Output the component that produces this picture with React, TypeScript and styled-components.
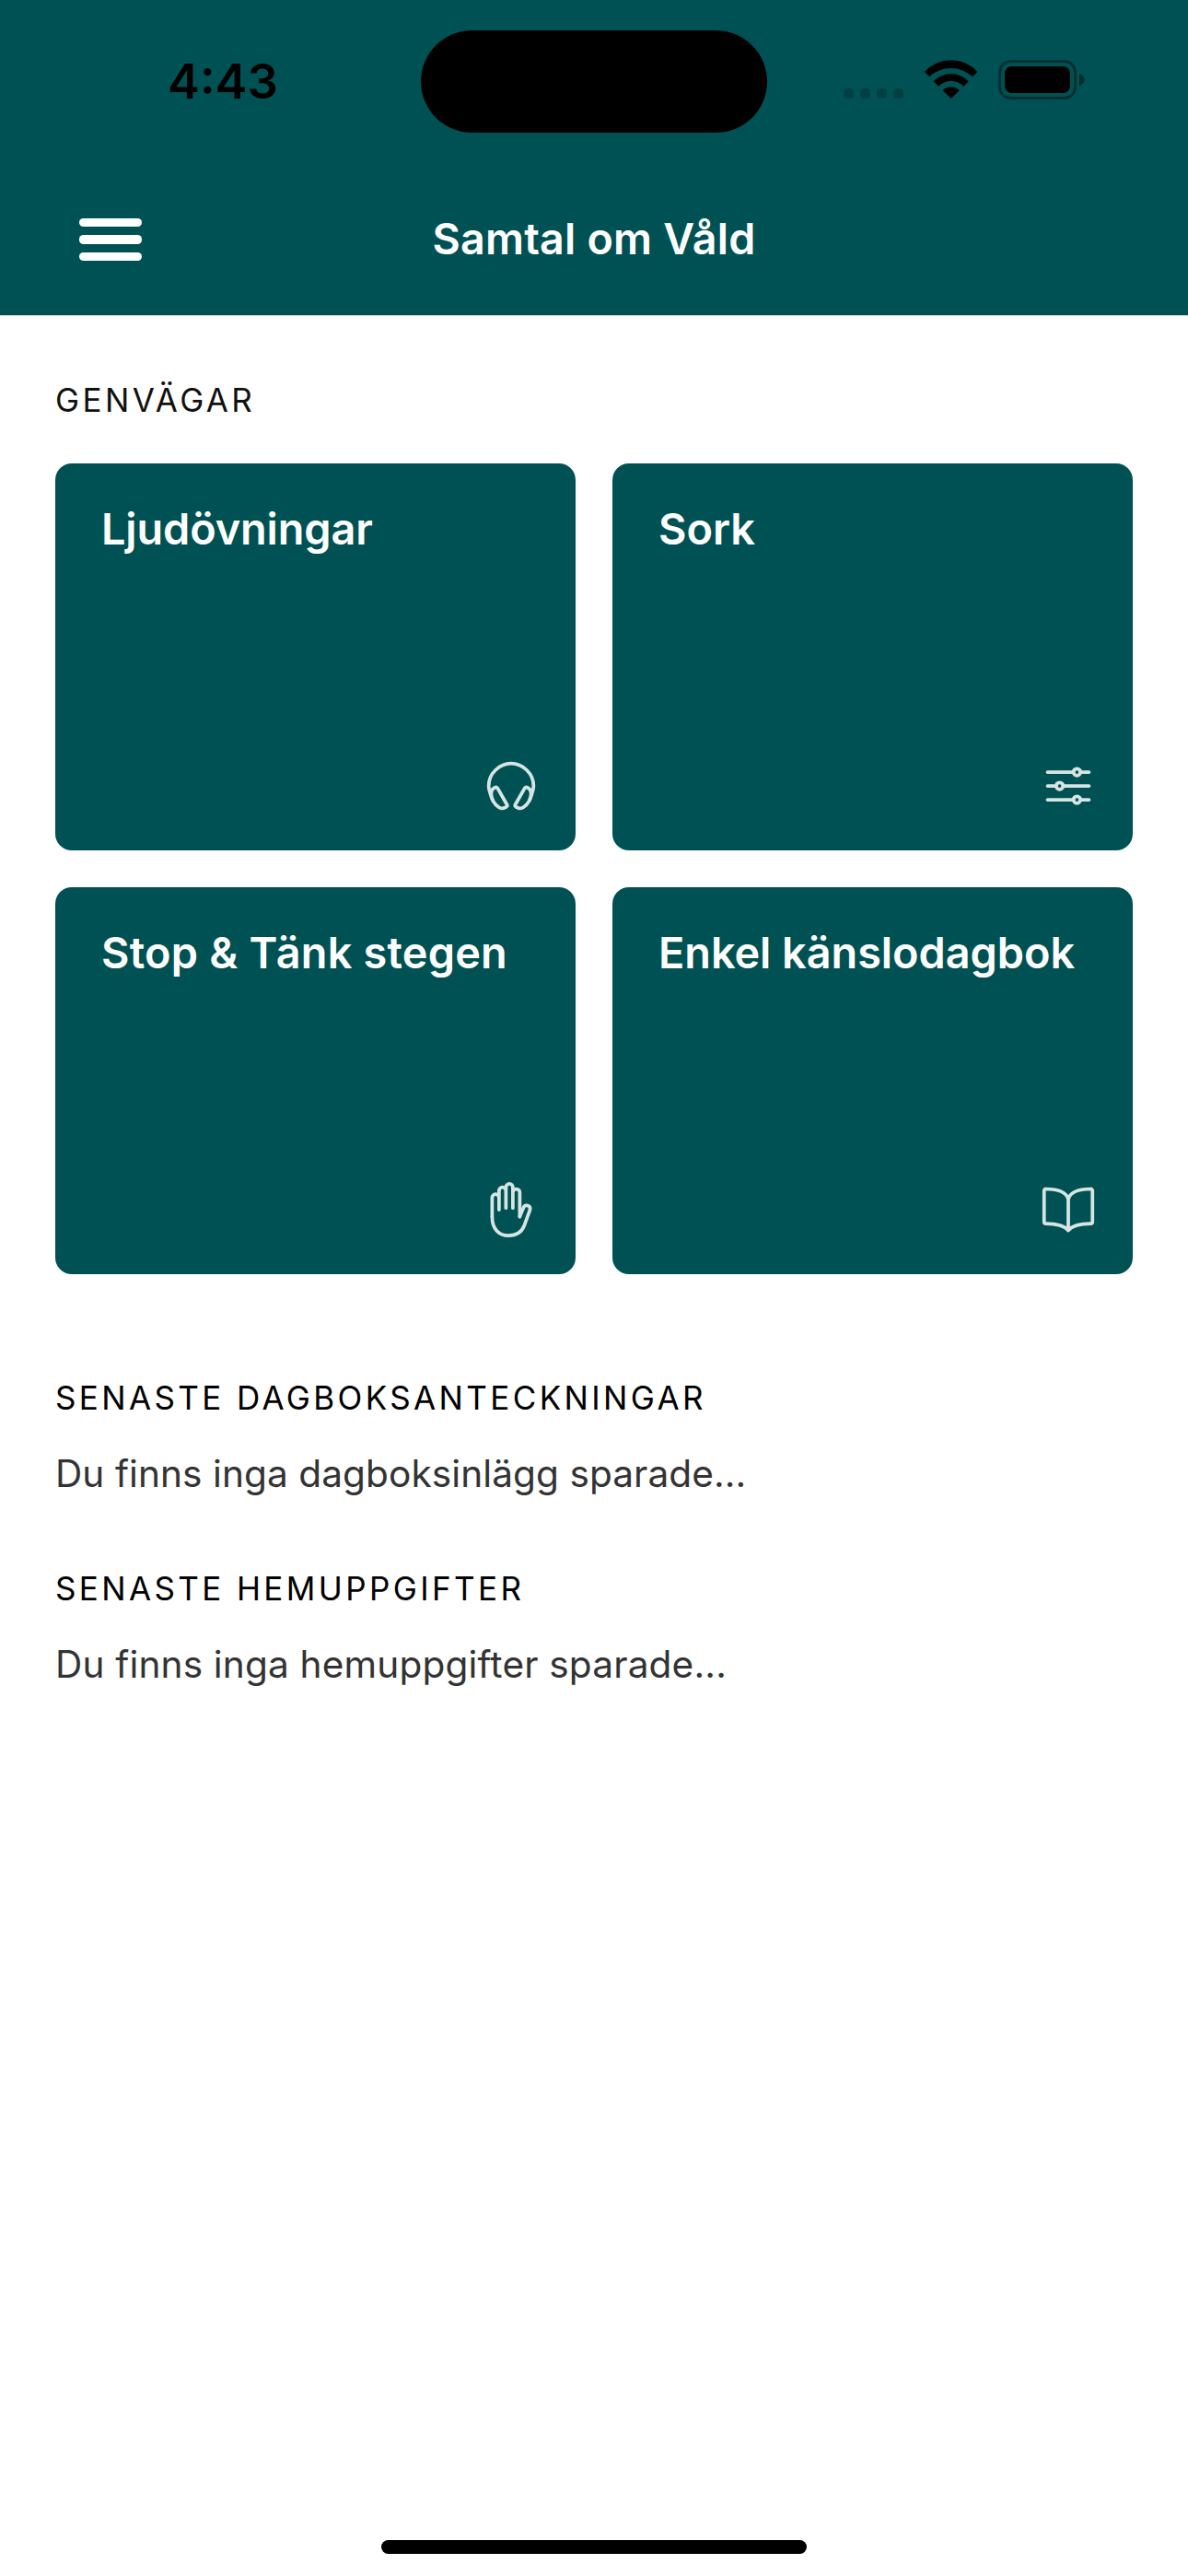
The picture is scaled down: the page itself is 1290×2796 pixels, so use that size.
import React from 'react';
import styled, { createGlobalStyle } from 'styled-components';
import { IoBookOutline, IoHandLeftOutline, IoHeadsetOutline, IoOptionsOutline } from 'react-icons/io5';
import type { IconType } from 'react-icons';

const teal = '#005153';

const GlobalStyle = createGlobalStyle`
  *, *::before, *::after { box-sizing: border-box; }
  body {
    margin: 0;
    background: #fff;
    font-family: Inter, "Liberation Sans", sans-serif;
  }
`;

const Screen = styled.div`
  width: 1290px;
  height: 2796px;
  display: flex;
  flex-direction: column;
  background: #fff;
  overflow: hidden;
`;

const Header = styled.header`
  background: ${teal};
  border-bottom: 1px solid #d5cfd2;
  height: 343px;
  flex: none;
`;

const StatusBar = styled.div`
  height: 177px;
  display: flex;
  align-items: flex-start;
`;

const TimeSlot = styled.div`
  width: 457px;
  padding: 58px 0 0 182px;
`;

const Time = styled.div`
  font-size: 52.4px;
  line-height: 60px;
  font-weight: 600;
  letter-spacing: 0;
  white-space: nowrap;
  color: #000;
`;

const Island = styled.div`
  width: 376px;
  height: 111px;
  margin-top: 33px;
  border-radius: 56px;
  background: #000;
`;

const StatusIcons = styled.div`
  display: flex;
  align-items: flex-end;
  height: 43px;
  margin: 65px 0 0 83px;
`;

const Signal = styled.div`
  display: flex;
  gap: 7px;
  margin: 0 23px 1px 0;
`;

const SignalDot = styled.span`
  width: 11px;
  height: 11px;
  border-radius: 4px;
  background: rgba(0, 0, 0, 0.2);
`;

const WifiIcon = styled.svg`
  display: block;
  width: 58px;
  height: 43px;
  margin-right: 22px;
`;

const BatteryIcon = styled.svg`
  display: block;
  width: 95px;
  height: 43px;
`;

const NavBar = styled.div`
  height: 165px;
  padding: 0 86px;
  display: grid;
  grid-template-columns: 1fr auto 1fr;
  align-items: center;
`;

const MenuButton = styled.button`
  width: 68px;
  padding: 0;
  margin-top: 1px;
  border: 0;
  background: none;
  display: flex;
  flex-direction: column;
  gap: 9.4px;
`;

const MenuLine = styled.span`
  height: 9.2px;
  border-radius: 4.6px;
  background: #fff;
`;

const NavTitle = styled.h1`
  margin: 0 0 2px;
  font-size: 46.6px;
  line-height: 56px;
  font-weight: 600;
  letter-spacing: 0.25px;
  white-space: nowrap;
  color: #fff;
`;

const Content = styled.main`
  flex: 1;
  padding: 70px 60px 0;
`;

const SectionTitle = styled.h2<{ $color?: string }>`
  margin: 0;
  font-size: 35px;
  line-height: 42px;
  font-weight: 400;
  letter-spacing: 3.38px;
  white-space: nowrap;
  color: ${(p) => p.$color ?? '#000'};
`;

const CardGrid = styled.div`
  display: grid;
  grid-template-columns: 1fr 1fr;
  grid-auto-rows: 420px;
  gap: 40px;
  margin: 48px 0 113px;
`;

const Card = styled.article`
  display: flex;
  flex-direction: column;
  justify-content: space-between;
  padding: 43px 0 40px 50px;
  border-radius: 18px;
  background: ${teal};
`;

const CardTitle = styled.h3<{ $tracking: number }>`
  margin: 0;
  font-size: 46.8px;
  line-height: 56px;
  font-weight: 600;
  letter-spacing: ${(p) => p.$tracking}px;
  white-space: nowrap;
  color: #fff;
`;

const CardIcon = styled.div`
  align-self: flex-end;
  margin-right: 40px;
  color: #d5e5e4;
  svg {
    display: block;
    width: 60px;
    height: 60px;
  }
`;

const EmptyText = styled.p<{ $tracking: number }>`
  margin: 37px 0 78px;
  font-size: 40.6px;
  line-height: 50px;
  letter-spacing: ${(p) => p.$tracking}px;
  white-space: nowrap;
  color: #333;
`;

const HomeIndicator = styled.div`
  flex: none;
  align-self: center;
  width: 462px;
  height: 15px;
  margin-bottom: 24px;
  border-radius: 8px;
  background: #000;
`;

type Shortcut = { title: string; icon: IconType; tracking: number };

const shortcuts: Shortcut[] = [
  { title: 'Ljudövningar', icon: IoHeadsetOutline, tracking: -0.1 },
  { title: 'Sork', icon: IoOptionsOutline, tracking: 0 },
  { title: 'Stop & Tänk stegen', icon: IoHandLeftOutline, tracking: 0.23 },
  { title: 'Enkel känslodagbok', icon: IoBookOutline, tracking: -0.03 },
];

export default function App() {
  return (
    <Screen>
      <GlobalStyle />
      <Header>
        <StatusBar>
          <TimeSlot>
            <Time>4:43</Time>
          </TimeSlot>
          <Island />
          <StatusIcons>
            <Signal>
              {[0, 1, 2, 3].map((n) => (
                <SignalDot key={n} />
              ))}
            </Signal>
            <WifiIcon viewBox="0 0 58 43">
              <path d="M0 13A38.8 38.8 0 0 1 57.4 13L52.1 18.3A34 34 0 0 0 5.3 18.3Z" />
              <path d="M9.7 23.3A26 26 0 0 1 47.7 23.3L42.4 28.7A19.4 19.4 0 0 0 15 28.7Z" />
              <path d="M19.7 33.3A12 12 0 0 1 37.7 33.3L28.7 42Z" />
            </WifiIcon>
            <BatteryIcon viewBox="0 0 95 43">
              <rect x="1.5" y="1.5" width="82" height="40" rx="12" fill="none" stroke="#000" strokeOpacity="0.4" strokeWidth="3" />
              <rect x="7" y="7" width="71" height="29" rx="7.5" />
              <path d="M88 15C91.5 16.2 93.7 18.8 93.7 21.5S91.5 27 88 28.3Z" fillOpacity="0.45" />
            </BatteryIcon>
          </StatusIcons>
        </StatusBar>
        <NavBar>
          <MenuButton aria-label="Meny">
            <MenuLine />
            <MenuLine />
            <MenuLine />
          </MenuButton>
          <NavTitle>Samtal om Våld</NavTitle>
        </NavBar>
      </Header>
      <Content>
        <SectionTitle $color="#111">GENVÄGAR</SectionTitle>
        <CardGrid>
          {shortcuts.map(({ title, icon: Icon, tracking }) => (
            <Card key={title}>
              <CardTitle $tracking={tracking}>{title}</CardTitle>
              <CardIcon>
                <Icon />
              </CardIcon>
            </Card>
          ))}
        </CardGrid>
        <SectionTitle>SENASTE DAGBOKSANTECKNINGAR</SectionTitle>
        <EmptyText $tracking={0.08}>Du finns inga dagboksinlägg sparade...</EmptyText>
        <SectionTitle>SENASTE HEMUPPGIFTER</SectionTitle>
        <EmptyText $tracking={0.17}>Du finns inga hemuppgifter sparade...</EmptyText>
      </Content>
      <HomeIndicator />
    </Screen>
  );
}
